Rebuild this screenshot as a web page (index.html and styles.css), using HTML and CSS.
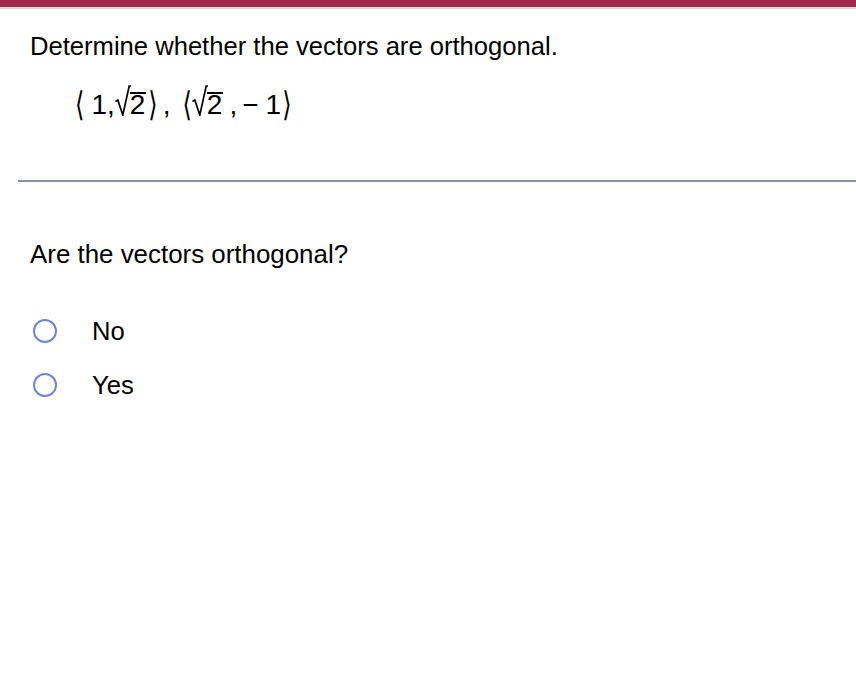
FILE: index.html
```html
<!DOCTYPE html>
<html>
<head>
<meta charset="utf-8">
<link rel="stylesheet" href="styles.css">
</head>
<body>
<div class="topbar"></div>
<div class="question">
  <p class="prompt">Determine whether the vectors are orthogonal.</p>
  <div class="math"><span class="ang">⟨</span><span class="one">1</span><span class="comma">,</span><span class="sqrt"><svg class="radical" width="16" height="32" viewBox="0 0 16 32"><polyline points="0.5,17.5 2.8,16 7.8,31 14.2,2 16,2" fill="none" stroke="#000" stroke-width="1.7" stroke-linejoin="miter"/></svg><span class="under">2</span></span><span class="ang close">⟩</span><span class="comma sep">,</span><span class="ang open2">⟨</span><span class="sqrt s2"><svg class="radical" width="16" height="32" viewBox="0 0 16 32"><polyline points="0.5,17.5 2.8,16 7.8,31 14.2,2 16,2" fill="none" stroke="#000" stroke-width="1.7" stroke-linejoin="miter"/></svg><span class="under">2</span></span><span class="comma c2">,</span><span class="minus">−</span><span class="one last">1</span><span class="ang close2">⟩</span></div>
</div>
<hr class="divider">
<div class="answer">
  <p class="ask">Are the vectors orthogonal?</p>
  <label class="option first"><span class="radio"></span><span>No</span></label>
  <label class="option"><span class="radio"></span><span>Yes</span></label>
</div>
</body>
</html>
```
FILE: styles.css
```css
html, body {
  margin: 0;
  padding: 0;
  background: #fff;
  font-family: "Liberation Sans", Arial, sans-serif;
  color: #000;
}
.topbar {
  height: 7px;
  background: #a3264b;
  border-bottom: 2px solid #d9d9e0;
}
.question {
  padding: 22px 0 0 30px;
  height: 171px;
  box-sizing: border-box;
}
.prompt {
  margin: 0;
  font-size: 25.6px;
  line-height: 30px;
}
.math {
  margin: 24px 0 0 45px;
  font-family: "Liberation Sans", Arial, sans-serif;
  font-size: 28px;
  line-height: 40px;
  height: 40px;
  display: flex;
  align-items: baseline;
}
.ang {
  display: inline-block;
  font-family: "DejaVu Sans", sans-serif;
  font-size: 24px;
  transform: translateY(2px) scaleY(1.4);
  transform-origin: 50% 70%;
}
.one {
  margin-left: 7px;
}
.close {
  margin-left: 2px;
}
.sep {
  margin-left: 5px;
}
.open2 {
  margin-left: 12px;
}
.c2 {
  margin-left: 6px;
}
.minus {
  margin-left: 5px;
}
.last {
  margin-left: 7px;
}
.close2 {
  margin-left: 1px;
}
.sqrt {
  position: relative;
  display: inline-block;
  padding-left: 15px;
}
.s2 {
  margin-left: 0;
  padding-left: 15px;
}
.radical {
  position: absolute;
  left: 0;
  top: -1px;
}
.under {
  display: inline-block;
  border-top: 2px solid #000;
  line-height: 22.7px;
  padding-right: 1px;
}
.divider {
  margin: 0 0 0 18px;
  border: 0;
  height: 2px;
  background: #8a929e;
}
.answer {
  padding: 57px 0 0 30px;
}
.ask {
  margin: 0;
  font-size: 25.9px;
  line-height: 30px;
}
.option {
  display: flex;
  align-items: center;
  font-size: 25.6px;
  height: 30px;
  margin-top: 24px;
}
.option.first {
  margin-top: 47px;
}
.radio {
  width: 20px;
  height: 20px;
  border: 2px solid #6f85dc;
  border-radius: 50%;
  margin: 0 35px 0 3px;
}
```
